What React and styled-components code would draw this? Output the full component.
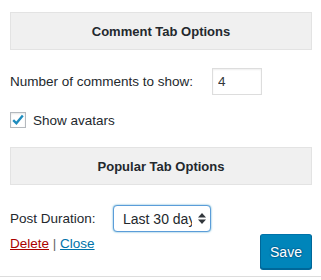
import React from "react";
import styled, { createGlobalStyle } from "styled-components";

const Global = createGlobalStyle`
  html, body { margin: 0; padding: 0; background: #fff; }
  body { font-family: "Liberation Sans", Arial, sans-serif; font-size: 13px; color: #23282d; }
`;

const Form = styled.div`
  width: 321px;
  box-sizing: border-box;
  padding: 12px 9px 7px 10px;
  border-bottom: 1px solid #dddddd;
`;

const SectionHeader = styled.div`
  box-sizing: border-box;
  height: 38px;
  display: flex;
  align-items: center;
  justify-content: center;
  background: #f0f0f0;
  border: 1px solid #e3e3e3;
  font-weight: bold;
  font-size: 13px;
  color: #23282d;
  margin-top: ${(p) => p.$top || 0}px;
`;

const Row = styled.div`
  display: flex;
  align-items: center;
  margin-top: ${(p) => p.$top || 0}px;
`;

const Label = styled.label`
  font-size: 13.5px;
  line-height: 15px;
  color: #23282d;
  width: ${(p) => p.$w}px;
  flex: none;
`;

const NumberInput = styled.input`
  box-sizing: border-box;
  width: 50px;
  height: 27px;
  border: 1px solid #dddddd;
  box-shadow: inset 0 1px 2px rgba(0, 0, 0, 0.07);
  padding: 0 5px;
  font-family: inherit;
  font-size: 13.5px;
  color: #32373c;
  outline: none;
  margin: 0;
`;

const CheckBox = styled.span`
  box-sizing: border-box;
  width: 16px;
  height: 16px;
  border: 1px solid #b4b9be;
  background: #fff;
  box-shadow: inset 0 1px 2px rgba(0, 0, 0, 0.1);
  display: flex;
  align-items: center;
  justify-content: center;
  flex: none;
`;

const CheckLabel = styled.span`
  margin-left: 7px;
  font-size: 13.5px;
  line-height: 15px;
`;

const SelectWrap = styled.div`
  position: relative;
  width: 98px;
  height: 27px;
  flex: none;
`;

const Select = styled.select`
  appearance: none;
  -webkit-appearance: none;
  box-sizing: border-box;
  width: 98px;
  height: 27px;
  margin: 0;
  padding: 0 18px 0 9px;
  border: 1px solid #5b9dd9;
  border-radius: 4px;
  box-shadow: 0 0 2px rgba(30, 140, 190, 0.8);
  background: #fff;
  font-family: inherit;
  font-size: 14px;
  color: #23282d;
  outline: none;
`;

const Arrows = styled.svg`
  position: absolute;
  right: 5px;
  top: 8px;
  pointer-events: none;
`;

const Footer = styled.div`
  display: flex;
  justify-content: space-between;
  align-items: flex-start;
  margin-top: 2px;
`;

const Links = styled.div`
  font-size: 13.5px;
  line-height: 15px;
  padding-top: 2px;
  color: #666;
`;

const Link = styled.a`
  color: ${(p) => (p.$danger ? "#a00" : "#0073aa")};
  text-decoration: underline;
`;

const SaveButton = styled.button`
  box-sizing: border-box;
  height: 35px;
  width: 52px;
  padding: 0;
  background: #0085ba;
  border: 1px solid #0073aa;
  border-color: #0073aa #006799 #006799;
  border-radius: 3px;
  box-shadow: 0 1px 0 #006799;
  color: #fff;
  font-family: inherit;
  font-size: 14px;
  text-shadow: 0 -1px 1px #006799, 1px 0 1px #006799, 0 1px 1px #006799, -1px 0 1px #006799;
`;

export default function App() {
  return (
    <>
      <Global />
      <Form>
        <SectionHeader>Comment Tab Options</SectionHeader>
        <Row $top={18}>
          <Label $w={202}>Number of comments to show:</Label>
          <NumberInput defaultValue="4" />
        </Row>
        <Row $top={17}>
          <CheckBox>
            <svg width="14" height="14" viewBox="0 0 14 14">
              <path d="M2.2 7.2 L5.4 10.3 L11.8 2.6" fill="none" stroke="#1e8cbe" strokeWidth="2.4" strokeLinecap="butt" strokeLinejoin="miter" />
            </svg>
          </CheckBox>
          <CheckLabel>Show avatars</CheckLabel>
        </Row>
        <SectionHeader $top={19}>Popular Tab Options</SectionHeader>
        <Row $top={20}>
          <Label $w={103}>Post Duration:</Label>
          <SelectWrap>
            <Select defaultValue="30">
              <option value="30">Last 30 days</option>
            </Select>
            <Arrows width="8" height="11" viewBox="0 0 8 11">
              <path d="M4 0 L8 4.5 L0 4.5 Z" fill="#32373c" />
              <path d="M4 11 L8 6.5 L0 6.5 Z" fill="#32373c" />
            </Arrows>
          </SelectWrap>
        </Row>
        <Footer>
          <Links>
            <Link $danger href="#">Delete</Link> | <Link href="#">Close</Link>
          </Links>
          <SaveButton>Save</SaveButton>
        </Footer>
      </Form>
    </>
  );
}
